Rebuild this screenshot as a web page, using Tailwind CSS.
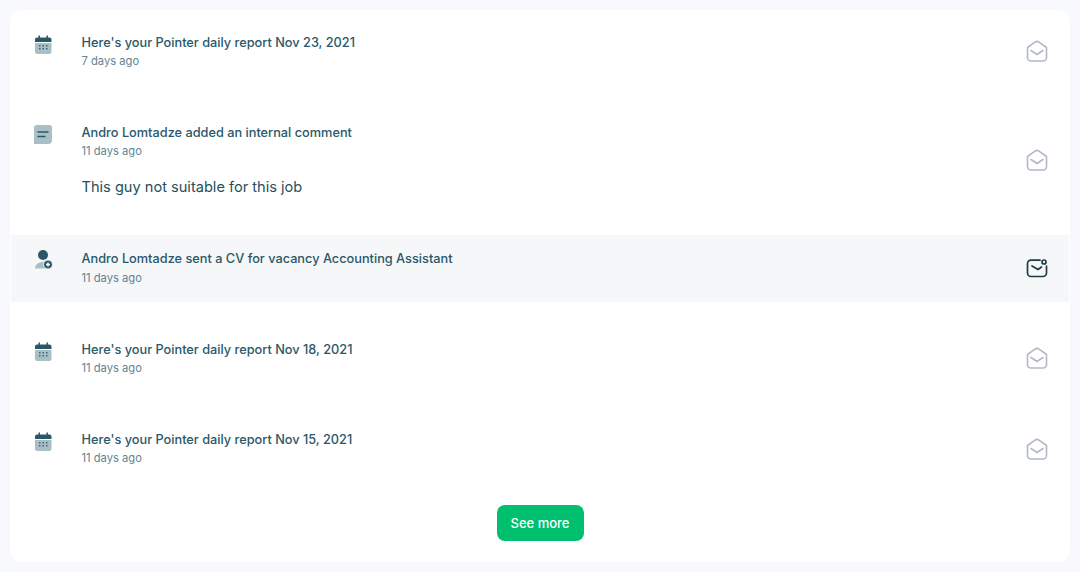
<!DOCTYPE html>
<html><head><meta charset="utf-8"><script src="https://cdn.jsdelivr.net/npm/@tailwindcss/browser@4"></script></head>
<body class="bg-[#f8f9fd] font-['Inter',sans-serif] w-[1080px] h-[572px] overflow-hidden">
<div class="m-[10px] w-[1060px] h-[552px] bg-white rounded-[12px] px-px pt-[9px] flex flex-col">

<div class="flex items-center h-[67px] mb-[23px] pl-[22px] pr-[21px]">
 <div class="w-[48.5px] self-start pt-[16px] shrink-0"><svg width="20" height="20" viewBox="0 0 20 20"><path d="M2 8h16.500v8.500A2.500 2.500 0 0 1 16 19H4.500A2.500 2.500 0 0 1 2 16.500z" fill="#a9bfc6"/><path d="M2 7V4.500A2 2 0 0 1 4 2.500h1.500V.5H7v2h6.500V.5H15v2h1.500a2 2 0 0 1 2 2V7z" fill="#2a5868"/><g fill="#3d6674"><rect x="6" y="10" width="1.500" height="1.500"/><rect x="9.500" y="10" width="1.500" height="1.500"/><rect x="13" y="10" width="1.500" height="1.500"/><rect x="6" y="13" width="1.500" height="1.500"/><rect x="9.500" y="13" width="1.500" height="1.500"/><rect x="13" y="13" width="1.500" height="1.500"/></g></svg></div>
 <div class="flex-1 -mt-[2px]"><p class="text-[12.75px] leading-[18px] pt-px font-[450] text-[#2a5868]">Here's your Pointer daily report Nov 23, 2021</p><p class="text-[11.2px] leading-[18px] text-[#5f8593]">7 days ago</p></div>
 <svg class="-mt-[3px]" width="22" height="22" viewBox="0 0 22 22" fill="none" stroke="#b3b8c9" stroke-width="1.600" stroke-linecap="round" stroke-linejoin="round"><path d="M1.500 7.500 9 2.200a3 3 0 0 1 4 0l7.500 5.300V17.500a3.500 3.500 0 0 1-3.500 3.500H5a3.500 3.500 0 0 1-3.500-3.500z"/><path d="M5 10.500l6 4 6-4"/></svg>
</div>

<div class="flex items-center h-[103px] mb-[23px] pl-[22px] pr-[21px]">
 <div class="w-[48.5px] self-start pt-[15px] shrink-0"><svg width="20" height="20" viewBox="0 0 20 20"><path d="M4 1h12a3 3 0 0 1 3 3v12a4 4 0 0 1-4 4H1V4a3 3 0 0 1 3-3z" fill="#a9bfc6"/><path d="M5 8h10M5 12.500h7" stroke="#2a5868" stroke-width="1.400" stroke-linecap="round"/></svg></div>
 <div class="flex-1 self-start"><p class="text-[12.75px] leading-[18px] pt-px font-[450] text-[#2a5868] mt-[14px]">Andro Lomtadze added an internal comment</p><p class="text-[11.2px] leading-[18px] text-[#5f8593]">11 days ago</p><p class="text-[14.6px] leading-[24px] mt-[15px] text-[#264f5c]">This guy not suitable for this job</p></div>
 <svg class="-mt-[2px]" width="22" height="22" viewBox="0 0 22 22" fill="none" stroke="#b3b8c9" stroke-width="1.600" stroke-linecap="round" stroke-linejoin="round"><path d="M1.500 7.500 9 2.200a3 3 0 0 1 4 0l7.500 5.300V17.500a3.500 3.500 0 0 1-3.500 3.500H5a3.500 3.500 0 0 1-3.500-3.500z"/><path d="M5 10.500l6 4 6-4"/></svg>
</div>

<div class="flex items-center h-[67px] mb-[24px] pl-[22px] pr-[21px] bg-[#f6f7f9]">
 <div class="w-[48.5px] self-start pt-[15px] shrink-0"><svg width="20" height="20" viewBox="0 0 20 20"><circle cx="10" cy="5" r="5" fill="#2a5868"/><path d="M2 18.500c0-4 3.500-6.500 8-6.500 2 0 3 .3 4 1v5.500z" fill="#a9bfc6"/><circle cx="15" cy="14.500" r="4.500" fill="#2a5868" stroke="#f6f7f9" stroke-width="1"/><path d="M15 12.500v4M13 14.500h4" stroke="#fff" stroke-width="1.400"/></svg></div>
 <div class="flex-1 -mt-[1px]"><p class="text-[12.75px] leading-[18px] font-[450] text-[#2a5868]">Andro Lomtadze sent a CV for vacancy Accounting Assistant</p><p class="text-[11.2px] leading-[18px] mt-px text-[#5f8593]">11 days ago</p></div>
 <svg class="-mt-[2px]" width="22" height="22" viewBox="0 0 22 22" fill="none" stroke="#1d3c47" stroke-width="1.700" stroke-linecap="round" stroke-linejoin="round"><path d="M14 3.200H5A3.500 3.500 0 0 0 1.500 6.700v9.300A3.500 3.500 0 0 0 5 19.500h12a3.500 3.500 0 0 0 3.500-3.500V9"/><path d="M6 9l6 3.500 3.500-2.500"/><circle cx="18" cy="5" r="2"/></svg>
</div>

<div class="flex items-center h-[67px] mb-[23px] pl-[22px] pr-[21px]">
 <div class="w-[48.5px] self-start pt-[16px] shrink-0"><svg width="20" height="20" viewBox="0 0 20 20"><path d="M2 8h16.500v8.500A2.500 2.500 0 0 1 16 19H4.500A2.500 2.500 0 0 1 2 16.500z" fill="#a9bfc6"/><path d="M2 7V4.500A2 2 0 0 1 4 2.500h1.500V.5H7v2h6.500V.5H15v2h1.500a2 2 0 0 1 2 2V7z" fill="#2a5868"/><g fill="#3d6674"><rect x="6" y="10" width="1.500" height="1.500"/><rect x="9.500" y="10" width="1.500" height="1.500"/><rect x="13" y="10" width="1.500" height="1.500"/><rect x="6" y="13" width="1.500" height="1.500"/><rect x="9.500" y="13" width="1.500" height="1.500"/><rect x="13" y="13" width="1.500" height="1.500"/></g></svg></div>
 <div class="flex-1 -mt-[2px]"><p class="text-[12.75px] leading-[18px] pt-px font-[450] text-[#2a5868]">Here's your Pointer daily report Nov 18, 2021</p><p class="text-[11.2px] leading-[18px] text-[#5f8593]">11 days ago</p></div>
 <svg class="-mt-[3px]" width="22" height="22" viewBox="0 0 22 22" fill="none" stroke="#b3b8c9" stroke-width="1.600" stroke-linecap="round" stroke-linejoin="round"><path d="M1.500 7.500 9 2.200a3 3 0 0 1 4 0l7.500 5.300V17.500a3.500 3.500 0 0 1-3.500 3.500H5a3.500 3.500 0 0 1-3.500-3.500z"/><path d="M5 10.500l6 4 6-4"/></svg>
</div>

<div class="flex items-center h-[67px] pl-[22px] pr-[21px]">
 <div class="w-[48.5px] self-start pt-[16px] shrink-0"><svg width="20" height="20" viewBox="0 0 20 20"><path d="M2 8h16.500v8.500A2.500 2.500 0 0 1 16 19H4.500A2.500 2.500 0 0 1 2 16.500z" fill="#a9bfc6"/><path d="M2 7V4.500A2 2 0 0 1 4 2.500h1.500V.5H7v2h6.500V.5H15v2h1.500a2 2 0 0 1 2 2V7z" fill="#2a5868"/><g fill="#3d6674"><rect x="6" y="10" width="1.500" height="1.500"/><rect x="9.500" y="10" width="1.500" height="1.500"/><rect x="13" y="10" width="1.500" height="1.500"/><rect x="6" y="13" width="1.500" height="1.500"/><rect x="9.500" y="13" width="1.500" height="1.500"/><rect x="13" y="13" width="1.500" height="1.500"/></g></svg></div>
 <div class="flex-1 -mt-[2px]"><p class="text-[12.75px] leading-[18px] pt-px font-[450] text-[#2a5868]">Here's your Pointer daily report Nov 15, 2021</p><p class="text-[11.2px] leading-[18px] text-[#5f8593]">11 days ago</p></div>
 <svg class="-mt-[2px]" width="22" height="22" viewBox="0 0 22 22" fill="none" stroke="#b3b8c9" stroke-width="1.600" stroke-linecap="round" stroke-linejoin="round"><path d="M1.500 7.500 9 2.200a3 3 0 0 1 4 0l7.500 5.300V17.500a3.500 3.500 0 0 1-3.500 3.500H5a3.500 3.500 0 0 1-3.500-3.500z"/><path d="M5 10.500l6 4 6-4"/></svg>
</div>

<div class="flex justify-center mt-[22px]"><button class="w-[87px] h-[36px] pt-px rounded-[8px] bg-[#00bf6f] text-white text-[13px] font-medium">See more</button></div>
</div>
</body></html>
